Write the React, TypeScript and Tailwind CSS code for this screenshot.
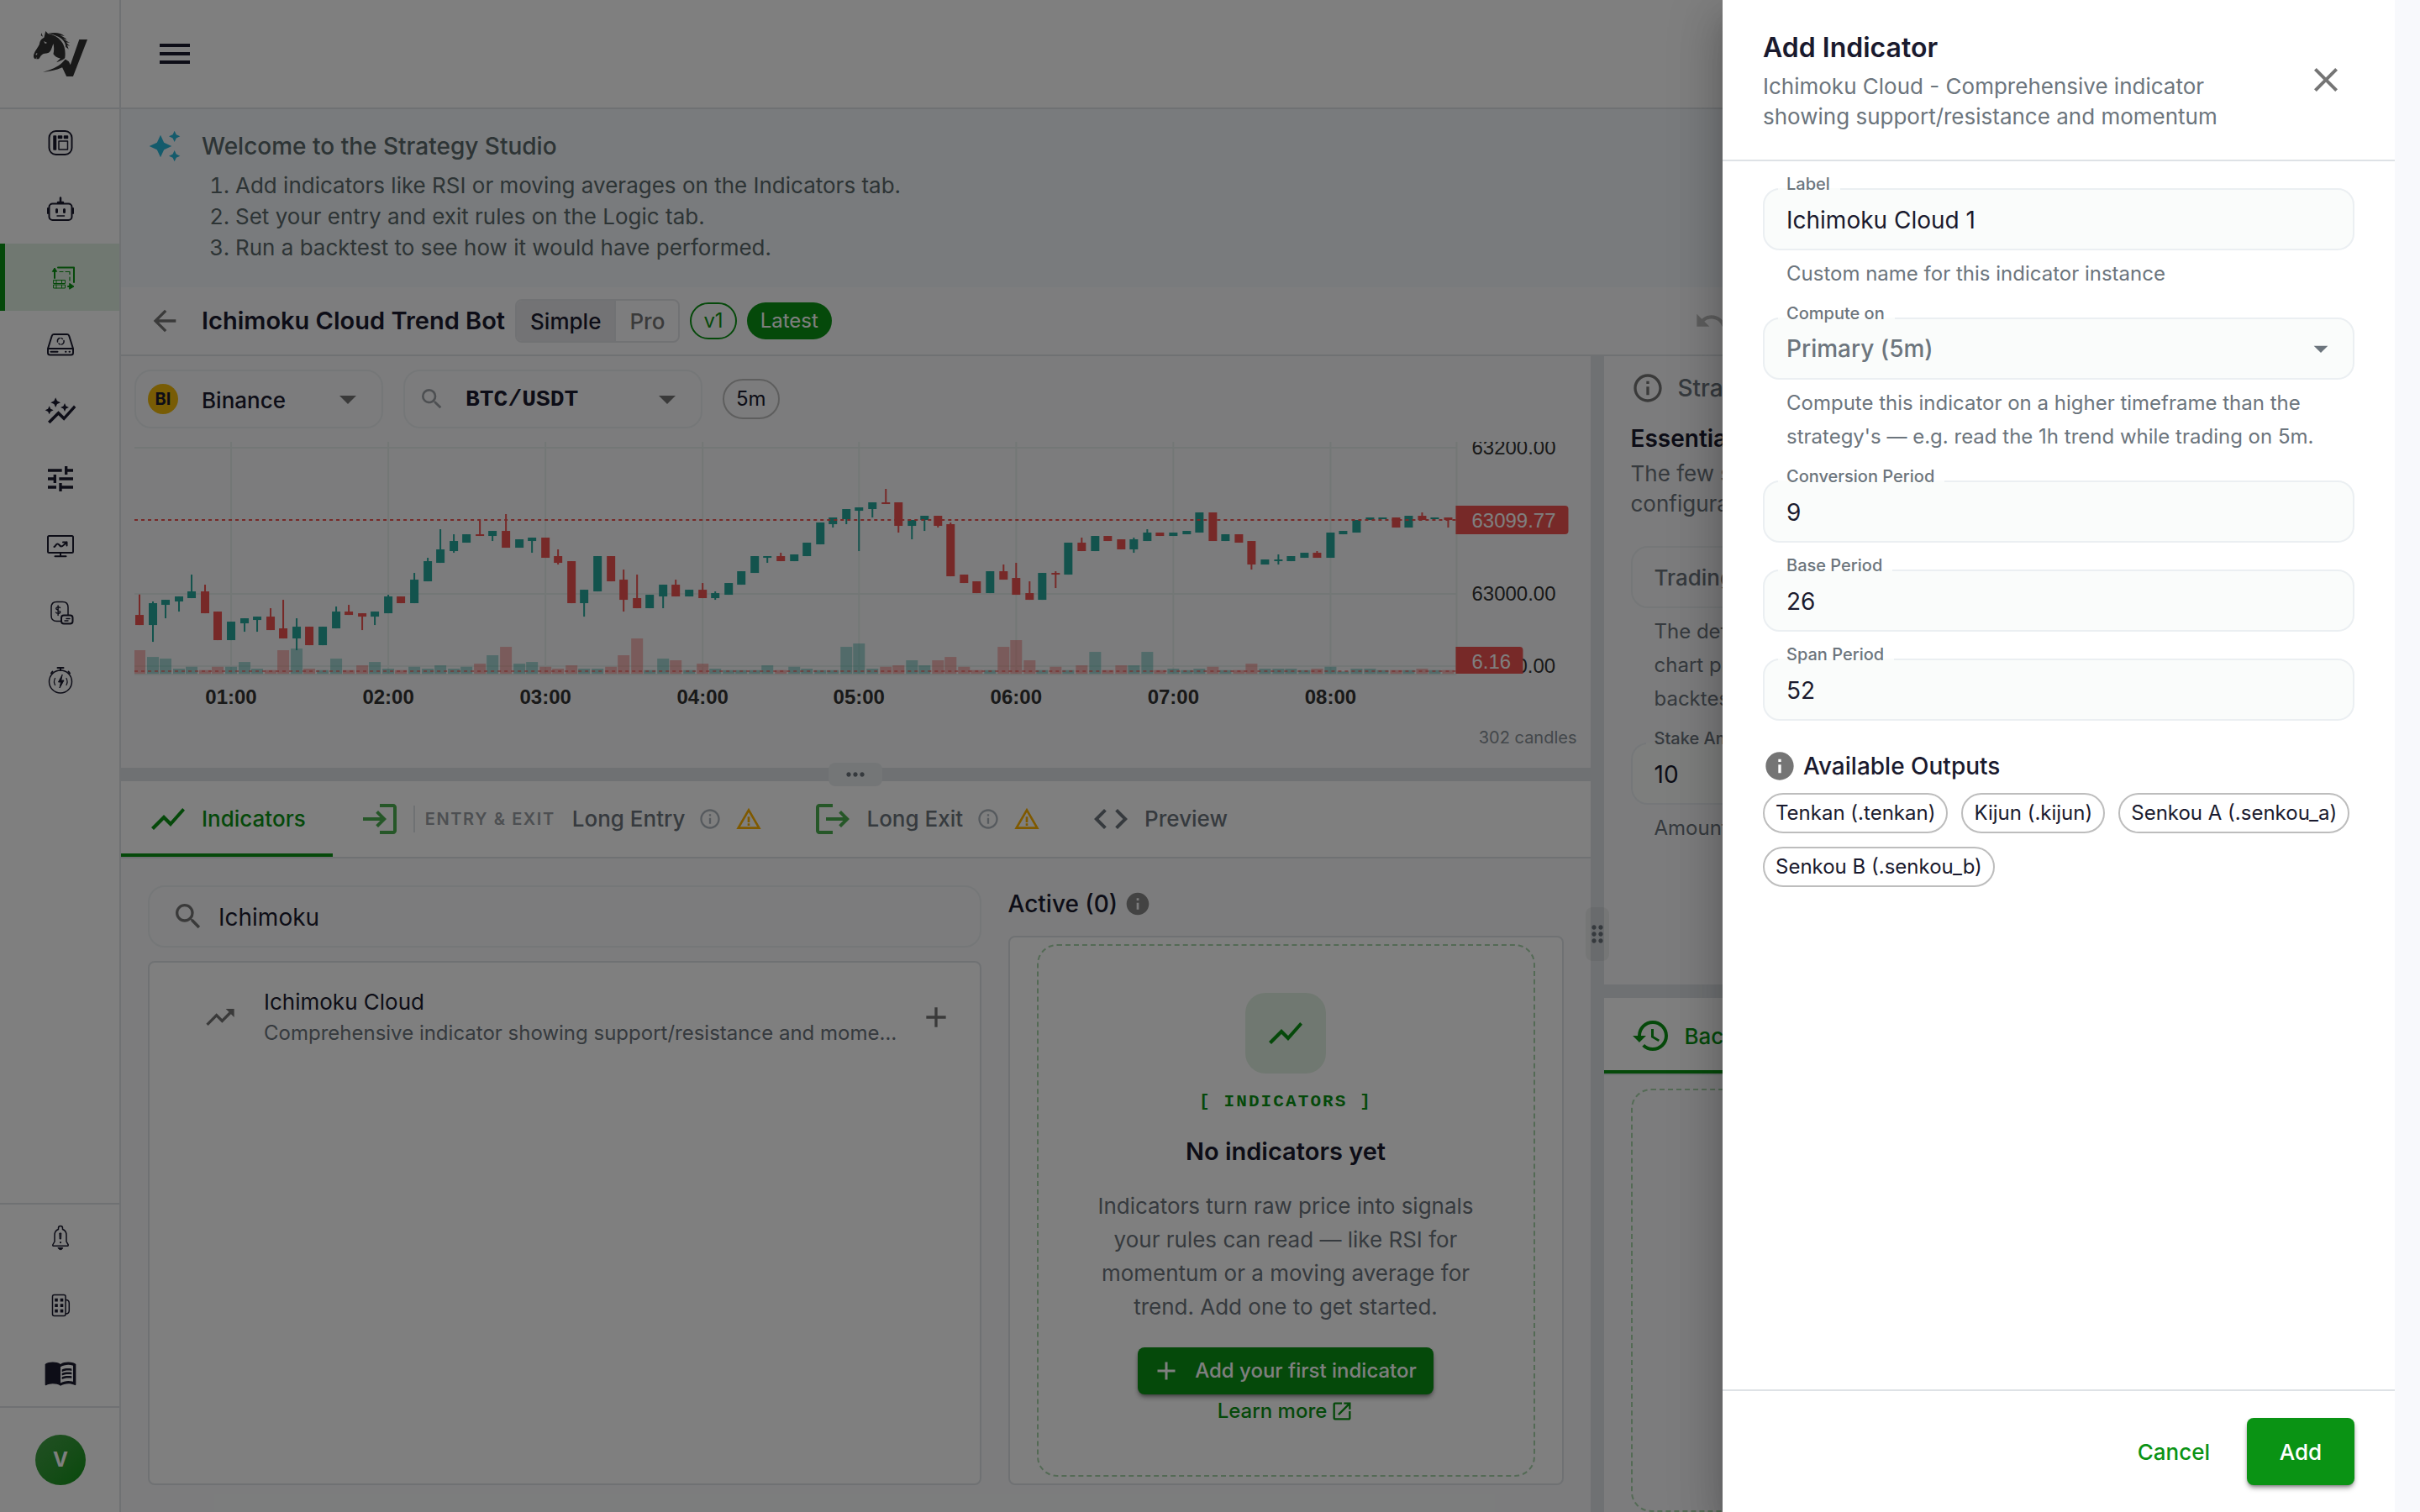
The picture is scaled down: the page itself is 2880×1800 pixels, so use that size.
import type { ReactNode } from 'react';
import {
  MdAdd,
  MdArrowBack,
  MdArrowDropDown,
  MdAutoAwesome,
  MdAutoGraph,
  MdClose,
  MdCode,
  MdDragIndicator,
  MdHistory,
  MdInfo,
  MdInfoOutline,
  MdLogin,
  MdMenu,
  MdMenuBook,
  MdMoreHoriz,
  MdOpenInNew,
  MdSearch,
  MdShowChart,
  MdTrendingUp,
  MdTune,
  MdUndo,
  MdWarningAmber,
} from 'react-icons/md';

/* ---------- chart data ---------- */

// [direction, high, body top, body bottom, low, volume top]
// levels are measured downwards, three units to a pixel
type Candle = [string, number, number, number, number, number];

const CANDLES: Candle[] = [
  ['r', 863, 936, 972, 972, 1062], ['g', 888, 894, 972, 1032, 1086], ['g', 882, 882, 900, 948, 1092],
  ['g', 870, 870, 888, 924, 1128], ['g', 792, 852, 876, 876, 1121], ['r', 828, 852, 930, 930, 1133],
  ['r', 924, 924, 1026, 1026, 1121], ['g', 960, 960, 1026, 1026, 1121], ['g', 948, 948, 966, 996, 1104],
  ['g', 942, 942, 954, 996, 1128], ['r', 912, 942, 990, 990, 1133], ['r', 882, 984, 1020, 1020, 1062],
  ['g', 948, 978, 1020, 1062, 1056], ['r', 978, 978, 1044, 1044, 1128], ['g', 978, 978, 1044, 1044, 1133],
  ['g', 906, 924, 984, 984, 1092], ['r', 900, 924, 936, 936, 1133], ['r', 930, 930, 942, 990, 1116],
  ['g', 924, 924, 942, 972, 1104], ['g', 864, 870, 930, 930, 1128], ['r', 870, 870, 894, 894, 1133],
  ['g', 786, 810, 894, 894, 1121], ['g', 732, 744, 816, 816, 1128], ['g', 630, 702, 750, 750, 1116],
  ['g', 648, 672, 708, 714, 1128], ['g', 648, 648, 678, 678, 1121], ['r', 597, 648, 654, 654, 1110],
  ['g', 636, 636, 654, 672, 1080], ['r', 576, 636, 696, 696, 1050], ['g', 666, 666, 696, 696, 1110],
  ['g', 660, 660, 672, 714, 1104], ['r', 660, 660, 732, 732, 1121], ['r', 702, 726, 750, 756, 1128],
  ['r', 744, 744, 894, 894, 1116], ['g', 846, 846, 894, 942, 1128], ['g', 726, 726, 852, 852, 1128],
  ['r', 726, 726, 816, 816, 1121], ['r', 774, 810, 882, 924, 1080], ['r', 792, 876, 912, 912, 1020],
  ['g', 864, 864, 912, 912, 1133], ['g', 828, 828, 870, 912, 1092], ['r', 810, 828, 870, 870, 1098],
  ['g', 846, 846, 870, 870, 1133], ['r', 822, 846, 876, 876, 1110], ['g', 852, 858, 876, 882, 1128],
  ['g', 822, 822, 864, 864, 1133], ['g', 780, 780, 828, 828, 1133], ['g', 726, 726, 786, 786, 1133],
  ['g', 726, 726, 732, 750, 1116], ['r', 714, 726, 744, 744, 1133], ['g', 720, 720, 744, 744, 1121],
  ['g', 678, 678, 726, 726, 1128], ['g', 606, 606, 684, 684, 1133], ['g', 588, 588, 612, 624, 1133],
  ['g', 558, 558, 594, 612, 1050], ['g', 552, 552, 564, 708, 1038], ['g', 534, 534, 558, 588, 1128],
  ['r', 486, 534, 540, 540, 1121], ['r', 534, 534, 618, 642, 1116], ['g', 597, 597, 618, 666, 1098],
  ['g', 582, 582, 597, 636, 1116], ['r', 582, 582, 618, 624, 1098], ['r', 606, 612, 798, 798, 1086],
  ['r', 792, 792, 822, 822, 1121], ['r', 816, 816, 858, 858, 1133], ['g', 780, 780, 858, 858, 1133],
  ['r', 756, 780, 810, 810, 1050], ['r', 750, 804, 864, 864, 1026], ['r', 816, 858, 882, 882, 1098],
  ['g', 786, 786, 882, 882, 1133], ['r', 780, 786, 792, 840, 1121], ['g', 678, 678, 792, 792, 1133],
  ['r', 660, 678, 708, 708, 1116], ['g', 654, 654, 708, 708, 1068], ['r', 654, 654, 672, 672, 1133],
  ['r', 666, 666, 702, 702, 1116], ['g', 660, 666, 702, 714, 1116], ['g', 630, 642, 672, 672, 1068],
  ['r', 642, 642, 654, 654, 1133], ['g', 642, 642, 654, 654, 1128], ['g', 636, 636, 648, 648, 1133],
  ['g', 570, 570, 642, 642, 1128], ['r', 570, 570, 672, 672, 1121], ['g', 648, 648, 672, 672, 1133],
  ['r', 648, 648, 678, 678, 1133], ['r', 672, 672, 756, 774, 1110], ['g', 738, 738, 756, 756, 1128],
  ['g', 720, 738, 744, 756, 1128], ['g', 726, 726, 744, 744, 1128], ['g', 714, 714, 732, 732, 1133],
  ['r', 708, 714, 732, 732, 1128], ['g', 642, 642, 732, 732, 1121], ['g', 636, 636, 648, 648, 1138],
  ['g', 597, 597, 642, 642, 1128], ['g', 588, 588, 597, 597, 1128], ['g', 588, 588, 594, 594, 1133],
  ['r', 588, 588, 624, 624, 1133], ['g', 582, 582, 624, 624, 1133], ['r', 570, 582, 597, 597, 1128],
  ['g', 588, 588, 594, 594, 1133], ['r', 588, 588, 597, 624, 1133],
];

const HOURS = ['01:00', '02:00', '03:00', '04:00', '05:00', '06:00', '07:00', '08:00'];

const toY = (level: number) => level / 3 - 106;
const toX = (index: number) => Math.round(115 + (index - 7) * 15.57);

function PriceChart() {
  return (
    <svg viewBox="0 0 1716 330" className="w-full h-auto block" role="img" aria-label="BTC/USDT price chart">
      <g stroke="#e7efec" strokeWidth="2">
        {[7, 181, 267, 277].map((y) => (
          <line key={y} x1="0" x2="1573" y1={y} y2={y} />
        ))}
        {HOURS.map((hour, i) => (
          <line key={hour} x1={toX(7 + i * 12)} x2={toX(7 + i * 12)} y1="0" y2="276" />
        ))}
        <line x1="1573" x2="1573" y1="0" y2="276" />
      </g>

      {CANDLES.map(([dir, , , , , volume], i) => (
        <rect
          key={i}
          x={toX(i) - 7}
          y={toY(volume)}
          width="14"
          height={276 - toY(volume)}
          fill={dir === 'g' ? '#26a69a' : '#ef5350'}
          fillOpacity="0.4"
        />
      ))}

      {CANDLES.map(([dir, high, top, bottom, low], i) => (
        <g key={i} fill={dir === 'g' ? '#26a69a' : '#ef5350'}>
          <rect x={toX(i) - 1} y={toY(high)} width="2" height={(low - high) / 3} />
          <rect x={toX(i) - 5} y={toY(top)} width="10" height={(bottom - top) / 3} />
        </g>
      ))}

      <line x1="0" x2="1573" y1="93" y2="93" stroke="#ef5350" strokeWidth="2" strokeDasharray="4 4" />
      <line x1="0" x2="1573" y1="273" y2="273" stroke="#ef5350" strokeOpacity="0.6" strokeWidth="2" strokeDasharray="4 4" />

      <g fontFamily="Liberation Sans, Arial, sans-serif" fontSize="24" fill="#333333">
        <text x="1591" y="15">63200.00</text>
        <text x="1591" y="189">63000.00</text>
        <text x="1644" y="275">0.00</text>
        <path d="M1572 76h130a4 4 0 0 1 4 4v26a4 4 0 0 1-4 4h-130z" fill="#ef5350" />
        <path d="M1572 244h76a4 4 0 0 1 4 4v28h-80z" fill="#ef5350" />
        <text x="1591" y="102" fill="#ffffff">63099.77</text>
        <text x="1591" y="270" fill="#ffffff">6.16</text>
        {HOURS.map((hour, i) => (
          <text key={hour} x={toX(7 + i * 12)} y="312" textAnchor="middle" fontWeight="700">
            {hour}
          </text>
        ))}
      </g>
    </svg>
  );
}

/* ---------- sidebar ---------- */

function LineIcon({ children }: { children: ReactNode }) {
  return (
    <svg
      viewBox="0 0 40 40"
      className="size-10"
      fill="none"
      stroke="currentColor"
      strokeWidth="1.5"
      strokeLinecap="round"
      strokeLinejoin="round"
      aria-hidden="true"
    >
      {children}
    </svg>
  );
}

function Logo() {
  return (
    <svg viewBox="0 0 139 161" preserveAspectRatio="none" className="w-16 h-[54px]" fill="#333333" aria-hidden="true">
      <path d="M118 30h21l-37 131H85L74 129c-16 10-34 14-50 17 20-8 38-18 50-34l8-12 9 8 4 12z" />
      <path
        fillRule="evenodd"
        d="M31 0l6 9c14 4 26 12 34 26 10 16 12 38 10 60-2 6-10 10-22 16 4-6 8-10 10-14-8-2-14-8-18-16 2-12 2-24 0-36-4 12-4 24-12 32-8 4-14 2-18 8-4 4-4 10-8 14h-6l2-8-4 8c-6-2-6-12-4-18 2-10 10-22 14-34 1-12 4-18 12-24zM26 36l9 6-5 3zM8 78c-3 3-3 6-1 8l3-6z"
      />
      <path d="M20 6l4 14-5-4zM38 8c16-4 32-4 42 10l-12-3c8 5 14 9 18 16l-10-5c8 8 12 12 18 15l-10-1c4 6 6 9 10 12l-8-1c2 4 4 8 4 14-2-4-5-6-7-8 0-20-10-38-45-49z" />
    </svg>
  );
}

const mainNav = [
  {
    label: 'Dashboard',
    icon: (
      <LineIcon>
        <rect x="6.500" y="6" width="27" height="28" rx="8" strokeWidth="2" />
        <path d="M12 12h2.500v16H12zM17.500 12h4v2.500h-4zM24.500 12h4v2.500h-4z" fill="currentColor" />
        <rect x="18" y="18" width="10.500" height="10" />
      </LineIcon>
    ),
  },
  {
    label: 'Bots',
    icon: (
      <LineIcon>
        <rect x="6.500" y="12.500" width="27" height="19.500" rx="4" strokeWidth="2" />
        <path d="M20 5.500v6M17 11h6" strokeWidth="2.500" />
        <path d="M5 18v6M35 18v6" strokeWidth="2" />
        <path d="M15.500 19.500v3M24.500 19.500v3" strokeWidth="3" />
        <path d="M16 27h8.500" />
      </LineIcon>
    ),
  },
  {
    label: 'Strategies',
    active: true,
    icon: (
      <LineIcon>
        <path d="M17 8.500h19V26" strokeWidth="2" />
        <path d="M13 21V11" strokeWidth="2" />
        <path d="M10.500 13l2.500-4 2.500 4zM31 27.500l5 3.500-5 3z" fill="currentColor" strokeWidth="1" />
        <path d="M29 31h3" strokeWidth="2" />
        <path d="M19 13.500h4M26 13.500h5v3M31 20v4" strokeWidth="1.200" />
        <path d="M12 23.500h13.500v4H12zM12 29h13.500v4H12zM15 23.500v4M15 29v4M21.500 24v3M21.500 29.500v3" strokeWidth="1" />
      </LineIcon>
    ),
  },
  {
    label: 'Data',
    icon: (
      <LineIcon>
        <path d="M12 8h16c1.500 0 2 1 2.300 2L35 25v5c0 1.500-1 2.500-2.500 2.500h-25C6 32.500 5 31.500 5 30v-5l4.700-15c.3-1 .800-2 2.300-2zM5 25h30" strokeWidth="2" />
        <path d="M8.500 28.800h8M26 28.800h.5M30.500 28.800h.5" strokeWidth="2" />
        <path d="M19 12.500a4 4 0 0 0-2.500 4.500M21.500 20a4 4 0 0 0 2.500-4.500M18 19l1.500 1M21 12.500l1.500 1" />
      </LineIcon>
    ),
  },
  { label: 'Insights', icon: <MdAutoGraph className="size-10" /> },
  { label: 'Optimize', icon: <MdTune className="size-10" /> },
  {
    label: 'Trading',
    icon: (
      <LineIcon>
        <rect x="5" y="8" width="30" height="20" rx="1.500" strokeWidth="2" />
        <path d="M20 28.500v3M13.500 32.300h13" strokeWidth="2" />
        <path d="M12.500 21c2-1 2-3.500 4-3.500s2.500 3 4.500 3 3.500-2.500 6.500-5M23 15.500h4.500v4" strokeWidth="2" />
      </LineIcon>
    ),
  },
  {
    label: 'Billing',
    icon: (
      <LineIcon>
        <path d="M20 29.500h-4.500c-4 0-6.500-2.500-6.500-6.500v-10c0-4 2.500-6.500 6.500-6.500h7c4 0 6.500 2.500 6.500 6.500v9" />
        <rect x="21" y="22.500" width="13.500" height="10" rx="3" strokeWidth="2" />
        <path d="M19.500 13.500c-.5-1.200-4.500-1.500-4.800.8-.2 2.500 5 1.600 5 4.200 0 2.300-4.200 2.200-5.200.5M17.100 11v11.500M25 29h4M27 26.500h4" strokeWidth="1.400" />
      </LineIcon>
    ),
  },
  {
    label: 'Quick run',
    icon: (
      <LineIcon>
        <circle cx="20" cy="21.500" r="13.500" />
        <path d="M16.500 5h7M20 5v3M10.500 9.500l-1.500 2M29.500 9.500l1.500 2" strokeWidth="2" />
        <path d="M22 13.500L17.500 22h3L19 29l5-9h-3z" fill="currentColor" strokeWidth="1" />
        <path d="M13.500 17.500c-1.300 2.500-1.300 5.500 0 8M27 17.500c1.300 2.500 1.300 5.500 0 8" strokeWidth="1.200" />
      </LineIcon>
    ),
  },
];

const footerNav = [
  {
    label: 'Alerts',
    icon: (
      <LineIcon>
        <path d="M20 5.500c-1.500 0-2.500 1-2.500 2.500v1.500c-3 1-4.500 3.500-4.500 7V24l-2 3.500c-.6 1 0 1.800 1 1.800h16c1 0 1.600-.8 1-1.800L27 24v-7.500c0-3.500-1.500-6-4.500-7V8c0-1.500-1-2.500-2.500-2.500z" />
        <path d="M17.300 31.500h5.400c-.5 3-4.900 3-5.400 0zM19.200 14h1.600l-.3 7h-1z" fill="currentColor" strokeWidth="1" />
        <path d="M20 25v.2" strokeWidth="2" />
      </LineIcon>
    ),
  },
  {
    label: 'Company',
    icon: (
      <LineIcon>
        <rect x="10.500" y="7.500" width="15.500" height="25" rx="2" />
        <path d="M26.500 13.500c3 0 3.800 1.500 3.800 4v8.500c0 2.500-.8 4-3.800 4" />
        <path d="M15 13.500v.1M21.500 13.500v.1M15 20v.1M21.500 20v.1M15 26.500v.1M21.500 26.500v.1" strokeWidth="3.600" strokeLinecap="square" />
      </LineIcon>
    ),
  },
  { label: 'Docs', icon: <MdMenuBook className="size-10" /> },
];

function NavLink({ label, icon, active }: { label: string; icon: ReactNode; active?: boolean }) {
  return (
    <a
      href="#"
      aria-label={label}
      className={
        active
          ? 'flex h-20 items-center justify-center border-l-[6px] border-[#0a9314] bg-[#e1f1e2] pr-1 text-[#0a9314]'
          : 'flex h-20 items-center justify-center pl-0.5'
      }
    >
      {icon}
    </a>
  );
}

function Sidebar() {
  return (
    <aside className="flex w-36 shrink-0 flex-col border-r-2 border-[#dee2e6] bg-white">
      <div className="flex h-[130px] items-center justify-center border-b-2 border-[#dee2e6] pr-0 pl-0.5">
        <Logo />
      </div>
      <nav className="grow">
        {mainNav.map((item) => (
          <NavLink key={item.label} {...item} />
        ))}
      </nav>
      <nav className="border-t-2 border-[#dee2e6]">
        {footerNav.map((item) => (
          <NavLink key={item.label} {...item} />
        ))}
      </nav>
      <div className="flex h-[126px] items-center justify-center border-t-2 border-[#dee2e6] pl-0.5">
        <button
          type="button"
          className="size-[60px] rounded-full bg-linear-to-br from-[#43a047] to-[#0a9314] text-2xl font-bold text-white"
        >
          V
        </button>
      </div>
    </aside>
  );
}

/* ---------- shared bits ---------- */

interface FieldProps {
  id: string;
  label: string;
  helper?: string;
  children: ReactNode;
}

// Outlined field with its label sitting in a notch of the border
function Field({ id, label, helper, children }: FieldProps) {
  return (
    <div>
      <div className="relative flex h-[74px] items-center rounded-[20px] bg-[#fafcfb]">
        <fieldset className="pointer-events-none absolute inset-x-0 -top-[5px] bottom-0 rounded-[20px] border-2 border-[#ebeff2] pl-4">
          <legend className="h-3 pl-[10px] pr-3 text-xl leading-0 font-medium whitespace-nowrap text-[#6c757d]">
            <label htmlFor={id}>{label}</label>
          </legend>
        </fieldset>
        {children}
      </div>
      {helper && <p className="mt-2 px-7 text-2xl leading-10 text-[#6c757d]">{helper}</p>}
    </div>
  );
}

const fieldInput = 'h-full w-full bg-transparent px-7 pt-0.5 text-[28px] text-[#1a1a2e] outline-none';

function Chip({ children }: { children: ReactNode }) {
  return (
    <span className="flex h-12 items-center rounded-full border-2 border-[#bdbdbd] px-[13px] text-2xl">{children}</span>
  );
}

function RowHandle() {
  return (
    <div className="relative bg-[#dee2e6]">
      <span className="absolute top-1/2 left-1/2 z-10 flex h-7 w-16 -translate-1/2 items-center justify-center rounded-lg bg-[#e9ecef] text-[#6c757d]">
        <MdMoreHoriz className="size-8" />
      </span>
    </div>
  );
}

/* ---------- workspace ---------- */

function ChartPanel() {
  return (
    <section className="flex flex-col px-4 pt-4">
      <div className="flex items-center gap-6">
        <div className="relative flex h-[70px] w-[296px] items-center rounded-[20px] border-2 border-[#ebeef1] pl-[14px]">
          <span className="flex size-9 shrink-0 items-center justify-center rounded-full bg-[#f0b90b] text-xl font-bold">BI</span>
          <select
            aria-label="Exchange"
            className="h-full w-full appearance-none bg-transparent pt-0.5 pl-7 text-[26px] font-medium outline-none"
          >
            <option>Binance</option>
          </select>
          <MdArrowDropDown className="pointer-events-none absolute right-4 size-12 text-[#757575]" />
        </div>
        <div className="flex h-[70px] w-[356px] items-center rounded-[20px] border-2 border-[#ebeef1] pr-4 pl-4">
          <MdSearch className="size-8 shrink-0 text-[#9a9fa4]" />
          <input
            aria-label="Pair"
            defaultValue="BTC/USDT"
            className="w-full min-w-0 bg-transparent pt-0.5 pl-6 font-['Liberation_Mono',monospace] text-[28px] font-bold outline-none"
          />
          <MdArrowDropDown className="size-12 shrink-0 text-[#757575]" />
        </div>
        <button type="button" className="h-12 rounded-full border-2 border-[#bdbdbd] px-[14px] text-2xl">
          5m
        </button>
      </div>
      <div className="mt-4">
        <PriceChart />
      </div>
      <p className="mt-[6px] text-right text-xl leading-8 text-[#868e96]">302 candles</p>
    </section>
  );
}

function StatusIcons() {
  return (
    <>
      <MdInfoOutline className="size-7 text-[#adb5bd]" />
      <MdWarningAmber className="size-8 text-[#ffb300]" />
    </>
  );
}

function IndicatorTabs() {
  return (
    <div role="tablist" className="flex h-[92px] border-b-2 border-[#dee2e6] bg-white text-[26px] font-medium text-[#6c757d]">
      <button role="tab" aria-selected="true" className="flex items-center gap-4 border-b-4 border-[#0a9314] px-8 pt-1 text-[#0a9314]">
        <MdShowChart className="size-12" />
        Indicators
      </button>
      <button role="tab" aria-selected="false" className="flex items-center gap-4 px-8">
        <MdLogin className="size-12 text-[#4caf50]" />
        <span className="mr-1 border-l-2 border-[#dee2e6] pl-3 text-xl leading-8 font-semibold tracking-[0.08em] text-[#9a9fa4]">
          ENTRY &amp; EXIT
        </span>
        Long Entry
        <StatusIcons />
      </button>
      <button role="tab" aria-selected="false" className="flex items-center gap-4 pr-8 pl-7">
        <svg viewBox="0 0 24 24" className="size-12 text-[#4caf50]" fill="currentColor" aria-hidden="true">
          <path d="M17 7l-1.400 1.400 2.600 2.600H8v2h10.200l-2.600 2.600L17 17l5-5-5-5zM4 5h8V3H4c-1.100 0-2 .9-2 2v14c0 1.100.9 2 2 2h8v-2H4V5z" />
        </svg>
        Long Exit
        <StatusIcons />
      </button>
      <button role="tab" aria-selected="false" className="flex items-center gap-4 pr-8 pl-7">
        <MdCode className="size-12" />
        Preview
      </button>
    </div>
  );
}

function IndicatorLibrary() {
  return (
    <div className="flex min-h-0 min-w-0 flex-col gap-4">
      <div className="flex h-[74px] shrink-0 items-center rounded-[20px] border-2 border-[#ebeef1] pl-[26px]">
        <MdSearch className="size-10 text-[#757575]" />
        <input
          aria-label="Search indicators"
          defaultValue="Ichimoku"
          className="grow bg-transparent pt-0.5 pl-4 text-[28px] outline-none"
        />
      </div>
      <ul className="grow rounded-lg border-2 border-[#dee2e6] bg-white pt-4">
        <li className="flex items-center py-3 pr-8 pl-16">
          <MdTrendingUp className="size-10 shrink-0 text-[#757575]" />
          <div className="ml-8 min-w-0 grow">
            <p className="text-[26px] leading-[38px]">Ichimoku Cloud</p>
            <p className="truncate text-2xl leading-9 text-[#6c757d]">
              Comprehensive indicator showing support/resistance and momentum
            </p>
          </div>
          <button type="button" aria-label="Add Ichimoku Cloud" className="ml-5 shrink-0 text-[#757575]">
            <MdAdd className="size-10" />
          </button>
        </li>
      </ul>
    </div>
  );
}

function ActiveIndicators() {
  return (
    <div className="flex min-h-0 min-w-0 flex-col gap-4">
      <h2 className="flex h-11 shrink-0 items-center gap-2 text-[28px] font-medium">
        Active (0)
        <MdInfo className="size-8 text-[#868686]" />
      </h2>
      <div className="flex min-h-0 grow rounded-lg border-2 border-[#dee2e6] bg-white px-8 py-2">
        <div className="flex grow flex-col items-center justify-center rounded-3xl border-2 border-dashed border-[#a8d5ab]">
          <span className="flex size-24 items-center justify-center rounded-3xl bg-[#e1f1e2] text-[#0a9314]">
            <MdShowChart className="size-12" />
          </span>
          <p className="mt-5 font-['Liberation_Mono',monospace] text-[21px] leading-7 font-bold tracking-widest text-[#0a9314]">
            [ INDICATORS ]
          </p>
          <h3 className="mt-6 text-[29px] leading-[42px] font-semibold">No indicators yet</h3>
          <p className="mt-6 w-[480px] text-center text-[26px] leading-10 text-[#6c757d]">
            Indicators turn raw price into signals your rules can read — like RSI for momentum or a moving average for
            trend. Add one to get started.
          </p>
          <button
            type="button"
            className="mt-7 flex h-14 items-center gap-4 rounded-lg bg-[#0a9314] pr-5 pl-4 text-2xl font-medium text-white shadow-md shadow-black/40"
          >
            <MdAdd className="size-9" />
            Add your first indicator
          </button>
          <a href="#" className="flex h-10 items-center gap-1 text-2xl font-medium text-[#0a9314]">
            Learn more
            <MdOpenInNew className="size-7" />
          </a>
        </div>
      </div>
    </div>
  );
}

function SettingsPanel() {
  return (
    <section className="overflow-hidden px-8 pt-[18px]">
      <h2 className="flex h-10 items-center gap-4 text-[28px] font-medium text-[#6c757d]">
        <MdInfoOutline className="size-10 text-[#757575]" />
        Strategy Settings
      </h2>
      <h3 className="mt-5 text-[28px] leading-10 font-semibold">Essentials</h3>
      <p className="mt-1 w-[600px] text-[26px] leading-9 text-[#6c757d]">
        The few settings every
        <br />
        configuration needs
      </p>
      <div className="mt-8 flex h-[74px] items-center rounded-[20px] border-2 border-[#ebeef1]">
        <select
          aria-label="Trading mode"
          className="h-full w-full appearance-none bg-transparent px-[26px] text-[26px] font-medium text-[#6c757d] outline-none"
        >
          <option>Trading mode</option>
        </select>
      </div>
      <p className="mt-2 px-7 text-2xl leading-10 text-[#6c757d]">
        The default pair for the
        <br />
        chart preview and every
        <br />
        backtest of this bot.
      </p>
      <div className="mt-8">
        <Field id="stake" label="Stake Amount" helper="Amount per trade">
          <input id="stake" defaultValue="10" className={fieldInput} />
        </Field>
      </div>
    </section>
  );
}

function ResultsPanel() {
  return (
    <section className="flex flex-col">
      <div role="tablist" className="flex h-[92px] shrink-0 border-b-2 border-[#dee2e6] bg-white">
        <button
          role="tab"
          aria-selected="true"
          className="flex items-center gap-4 border-b-4 border-[#0a9314] px-8 pt-1 text-[26px] font-medium text-[#0a9314]"
        >
          <MdHistory className="size-12" />
          Backtest
        </button>
      </div>
      <div className="mx-8 mt-4 grow rounded-3xl border-2 border-dashed border-[#a8d5ab]" />
    </section>
  );
}

function Workspace() {
  return (
    <div className="grid min-h-0 grow grid-cols-[minmax(0,65fr)_16px_minmax(0,35fr)] bg-[#f8f9fa]">
      <div className="grid min-h-0 grid-rows-[minmax(0,36fr)_16px_minmax(0,64fr)]">
        <ChartPanel />
        <RowHandle />
        <section className="flex min-h-0 flex-col">
          <IndicatorTabs />
          <div className="grid min-h-0 grow grid-cols-[3fr_2fr] gap-8 p-8">
            <IndicatorLibrary />
            <ActiveIndicators />
          </div>
        </section>
      </div>
      <div className="relative bg-[#dee2e6]">
        <span className="absolute top-1/2 left-1/2 z-10 flex h-16 w-7 -translate-1/2 items-center justify-center rounded-lg bg-black/5 text-[#6c757d]">
          <MdDragIndicator className="size-8 shrink-0" />
        </span>
      </div>
      <div className="grid min-h-0 grid-rows-[minmax(0,55fr)_16px_minmax(0,45fr)]">
        <SettingsPanel />
        <div className="bg-[#dee2e6]" />
        <ResultsPanel />
      </div>
    </div>
  );
}

/* ---------- drawer ---------- */

function AddIndicatorDrawer() {
  return (
    <aside
      role="dialog"
      aria-labelledby="drawer-title"
      className="relative flex w-[800px] shrink-0 flex-col bg-white shadow-[0_16px_20px_-10px_rgba(0,0,0,0.2),0_32px_48px_4px_rgba(0,0,0,0.14),0_12px_60px_10px_rgba(0,0,0,0.12)]"
    >
      <header className="flex h-48 items-center justify-between border-b-2 border-[#dee2e6] px-12">
        <div className="w-[580px]">
          <h2 id="drawer-title" className="text-[32px] leading-[48px] font-semibold">Add Indicator</h2>
          <p className="mt-1 text-[26px] leading-9 text-[#6c757d]">
            Ichimoku Cloud - Comprehensive indicator showing support/resistance and momentum
          </p>
        </div>
        <button type="button" aria-label="Close" className="p-[10px] text-[#757575]">
          <MdClose className="size-12" />
        </button>
      </header>

      <div className="flex grow flex-col gap-8 px-12 pt-8">
        <Field id="label" label="Label" helper="Custom name for this indicator instance">
          <input id="label" defaultValue="Ichimoku Cloud 1" className={fieldInput} />
        </Field>
        <Field
          id="timeframe"
          label="Compute on"
          helper="Compute this indicator on a higher timeframe than the strategy's — e.g. read the 1h trend while trading on 5m."
        >
          <select
            id="timeframe"
            className="h-full w-full appearance-none bg-transparent px-7 text-[28px] font-medium text-[#6c757d] outline-none"
          >
            <option>Primary (5m)</option>
          </select>
          <MdArrowDropDown className="pointer-events-none absolute right-5 size-10 text-[#6c757d]" />
        </Field>
        <Field id="conversion" label="Conversion Period">
          <input id="conversion" defaultValue="9" className={fieldInput} />
        </Field>
        <Field id="base" label="Base Period">
          <input id="base" defaultValue="26" className={fieldInput} />
        </Field>
        <Field id="span" label="Span Period">
          <input id="span" defaultValue="52" className={fieldInput} />
        </Field>

        <div>
          <h3 className="flex h-11 items-center gap-2 text-[28px] font-medium">
            <MdInfo className="size-10 text-[#757575]" />
            Available Outputs
          </h3>
          <div className="mt-[10px] flex flex-wrap gap-4">
            <Chip>Tenkan (.tenkan)</Chip>
            <Chip>Kijun (.kijun)</Chip>
            <Chip>Senkou A (.senkou_a)</Chip>
            <Chip>Senkou B (.senkou_b)</Chip>
          </div>
        </div>
      </div>

      <footer className="flex justify-end gap-4 border-t-2 border-[#dee2e6] px-12 py-8 text-[26px] font-medium">
        <button type="button" className="h-20 px-7 text-[#0a9314]">
          Cancel
        </button>
        <button type="button" className="h-20 w-32 rounded-lg bg-[#0a9314] text-white shadow-md shadow-black/40">
          Add
        </button>
      </footer>
    </aside>
  );
}

export default function App() {
  return (
    <div className="h-screen bg-[#f8f9fc] pr-[30px] font-['Inter',sans-serif] text-[#1a1a2e]">
      <div className="relative flex h-full overflow-hidden">
        <Sidebar />
        <main className="flex min-w-0 grow flex-col bg-white">
          <header className="flex h-[130px] shrink-0 items-center border-b-2 border-[#dee2e6] px-10">
            <button type="button" aria-label="Menu">
              <MdMenu className="size-12" />
            </button>
          </header>

          <div className="flex shrink-0 gap-6 bg-[#f2f7fa] px-8 pt-6 pb-[29px] text-[#5b686b]">
            <MdAutoAwesome className="size-10 text-[#29b6d8]" />
            <div>
              <h2 className="text-[28px] leading-10 font-medium">Welcome to the Strategy Studio</h2>
              <ol className="mt-2 list-decimal pl-10 text-[26px] leading-[37px]">
                <li>Add indicators like RSI or moving averages on the Indicators tab.</li>
                <li>Set your entry and exit rules on the Logic tab.</li>
                <li>Run a backtest to see how it would have performed.</li>
              </ol>
            </div>
          </div>

          <div className="flex h-[82px] shrink-0 items-center gap-3 border-b-2 border-[#dee2e6] bg-[#fbfbfc] px-8">
            <button type="button" aria-label="Back" className="mr-3 text-[#757575]">
              <MdArrowBack className="size-10" />
            </button>
            <h1 className="text-[29px] font-semibold">Ichimoku Cloud Trend Bot</h1>
            <div className="flex h-[52px] overflow-hidden rounded-lg border-2 border-[#e3e5e8] text-[26px] font-medium">
              <button type="button" className="border-r-2 border-[#e3e5e8] bg-[#e6e7ea] px-4">Simple</button>
              <button type="button" className="px-4 text-[#757575]">Pro</button>
            </div>
            <span className="flex h-11 items-center rounded-full border-2 border-[#0a9314] px-[14px] text-2xl text-[#0a9314]">
              v1
            </span>
            <span className="flex h-11 items-center rounded-full bg-[#0a9314] px-4 text-2xl text-white">Latest</span>
            <div className="ml-auto w-[802px]">
              <button type="button" aria-label="Undo" disabled className="block text-[#bdbdbd]">
                <MdUndo className="size-10" />
              </button>
            </div>
          </div>

          <Workspace />
        </main>

        {/* modal layer */}
        <div className="absolute inset-0 z-20 flex justify-end bg-black/50">
          <AddIndicatorDrawer />
        </div>
      </div>
    </div>
  );
}
